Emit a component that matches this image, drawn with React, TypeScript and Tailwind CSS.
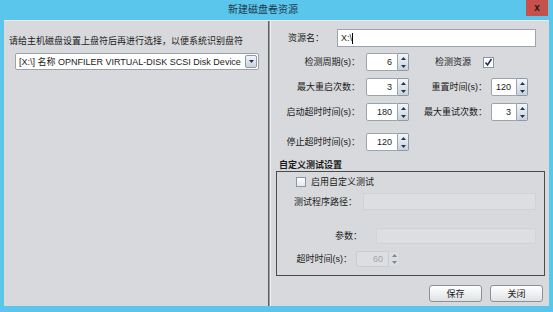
import React from "react";

function Up() {
  return (
    <svg width="5" height="3" viewBox="0 0 5 3">
      <path d="M0 3 L2.5 0 L5 3Z" fill="#1d3557" />
    </svg>
  );
}
function Down() {
  return (
    <svg width="5" height="3" viewBox="0 0 5 3">
      <path d="M0 0 L2.5 3 L5 0Z" fill="#1d3557" />
    </svg>
  );
}

function Spinner({
  value,
  fieldClass,
  disabled = false,
}: {
  value: string;
  fieldClass: string;
  disabled?: boolean;
}) {
  return (
    <div className={`flex ${disabled ? "h-[16px]" : "h-[18px]"}`}>
      <div
        className={`${fieldClass} h-full border rounded-l-[2px] flex items-center justify-end pr-[5px] ${
          disabled ? "border-[#c9ccd0] bg-[#dcdee1] text-[#a3a6a9]" : "border-[#9ca5ae] bg-white text-[#1a1a1a]"
        }`}
      >
        {value}
      </div>
      <div
        className={`w-[11px] h-full border border-l-0 rounded-r-[2px] flex flex-col ${
          disabled
            ? "border-[#cfd2d5] bg-[#e0e2e4] opacity-50"
            : "border-[#8c9aa8] bg-linear-to-b from-[#f4f6f9] to-[#c9d2dc]"
        }`}
      >
        <div className="flex-1 flex items-center justify-center">
          <Up />
        </div>
        <div className="flex-1 flex items-center justify-center">
          <Down />
        </div>
      </div>
    </div>
  );
}

function Btn({ children }: { children: React.ReactNode }) {
  return (
    <div className="w-[53px] h-[17px] rounded-[3px] border border-[#8d8f91] bg-linear-to-b from-[#ffffff] to-[#dfe2e5] flex items-center justify-center text-[#1a1a1a]">
      {children}
    </div>
  );
}

export default function App() {
  return (
    <div className="w-[553px] h-[312px] bg-[#5bc6eb] flex flex-col font-['Liberation_Sans','Noto_Sans_CJK_SC',sans-serif] text-[9px] leading-[12px] text-[#1a1a1a] overflow-hidden">
      {/* title bar */}
      <div className="h-[20px] flex items-start shrink-0">
        <div className="flex-1 text-center text-[10px] leading-[20px] text-[#1d3a4e]">新建磁盘卷资源</div>
        <div className="w-[22px] h-[16px] mr-[5px] bg-[#c8504c] flex items-center justify-center text-[10px] leading-none font-bold text-[#1a1a1a]">
          x
        </div>
      </div>

      {/* body */}
      <div className="mx-[4px] h-[286px] flex bg-[#d8d9dc] border-t border-[#e9ebed]">
        {/* left panel */}
        <div className="w-[264px] flex flex-col pt-[14px]">
          <div className="pl-[5px] h-[12px]">请给主机磁盘设置上盘符后再进行选择，以便系统识别盘符</div>
          <div className="ml-[11px] mt-[6px] w-[244px] h-[17px] bg-white border border-[#9aa3ab] rounded-[2px] flex items-center">
            <div className="flex-1 pl-[3px] whitespace-nowrap">[X:\] 名称 OPNFILER VIRTUAL-DISK SCSI Disk Device</div>
            <div className="w-[12px] h-[13px] mr-[1px] rounded-[2px] border border-[#8c9aa8] bg-linear-to-b from-[#f4f6f9] to-[#c9d2dc] flex items-center justify-center">
              <Down />
            </div>
          </div>
        </div>

        {/* divider */}
        <div className="w-[1px] bg-[#5c5e60]" />
        <div className="w-[1px] bg-[#9b9da0]" />
        <div className="w-[1px] bg-[#eef0f2]" />

        {/* right panel */}
        <div className="flex-1 flex flex-col pt-[8px]">
          {/* row 1 */}
          <div className="flex items-center h-[18px]">
            <div className="w-[66px] pl-[17px]">资源名：</div>
            <div className="w-[199px] h-[18px] bg-white border border-[#9ca5ae] flex items-center pl-[3px]">
              <span>X:\</span>
              <span className="w-[1px] h-[11px] bg-black" />
            </div>
          </div>

          {/* row 2 */}
          <div className="flex items-center mt-[6px]">
            <div className="w-[89px] text-right">检测周期(s)：</div>
            <div className="ml-[6px]">
              <Spinner value="6" fieldClass="w-[32px]" />
            </div>
            <div className="ml-[26px] w-[36px]">检测资源</div>
            <div className="ml-[12px] w-[11px] h-[11px] bg-white border border-[#8a96a3] flex items-center justify-center">
              <svg width="9" height="9" viewBox="0 0 9 9">
                <path d="M1.5 4.5 L3.5 7 L7.5 1" stroke="#1d3557" strokeWidth="1.6" fill="none" />
              </svg>
            </div>
          </div>

          {/* row 3 */}
          <div className="flex items-center mt-[7px]">
            <div className="w-[89px] text-right">最大重启次数：</div>
            <div className="ml-[6px]">
              <Spinner value="3" fieldClass="w-[32px]" />
            </div>
            <div className="w-[78px] text-right">重置时间(s)：</div>
            <div className="ml-[4px]">
              <Spinner value="120" fieldClass="w-[26px]" />
            </div>
          </div>

          {/* row 4 */}
          <div className="flex items-center mt-[7px]">
            <div className="w-[89px] text-right">启动超时时间(s)：</div>
            <div className="ml-[6px]">
              <Spinner value="180" fieldClass="w-[32px]" />
            </div>
            <div className="w-[78px] text-right">最大重试次数：</div>
            <div className="ml-[4px]">
              <Spinner value="3" fieldClass="w-[26px]" />
            </div>
          </div>

          {/* row 5 */}
          <div className="flex items-center mt-[12px]">
            <div className="w-[89px] text-right">停止超时时间(s)：</div>
            <div className="ml-[6px]">
              <Spinner value="120" fieldClass="w-[32px]" />
            </div>
          </div>

          {/* group heading */}
          <div className="mt-[9px] h-[11px] leading-[11px] pl-[8px] font-bold">自定义测试设置</div>

          {/* group box */}
          <div className="ml-[5px] w-[269px] h-[105px] border border-[#4a4b4d] flex flex-col">
            <div className="flex items-center mt-[5px] ml-[19px] h-[10px]">
              <div className="w-[10px] h-[10px] bg-linear-to-b from-[#ffffff] to-[#e6e8ea] border border-[#8a96a3]" />
              <div className="ml-[5px]">启用自定义测试</div>
            </div>
            <div className="flex items-center mt-[6px]">
              <div className="w-[80px] text-right">测试程序路径：</div>
              <div className="ml-[6px] w-[173px] h-[17px] bg-[#dcdee1] border border-[#d0d3d6]" />
            </div>
            <div className="flex items-center mt-[18px]">
              <div className="w-[85px] text-right">参数：</div>
              <div className="ml-[14px] w-[160px] h-[16px] bg-[#dcdee1] border border-[#d0d3d6]" />
            </div>
            <div className="flex items-center mt-[7px]">
              <div className="w-[75px] text-right">超时时间(s)：</div>
              <div className="ml-[4px]">
                <Spinner value="60" fieldClass="w-[33px]" disabled />
              </div>
            </div>
          </div>

          {/* buttons */}
          <div className="flex justify-end gap-[8px] mt-[9px] pr-[6px]">
            <Btn>保存</Btn>
            <Btn>关闭</Btn>
          </div>
        </div>
      </div>
    </div>
  );
}
